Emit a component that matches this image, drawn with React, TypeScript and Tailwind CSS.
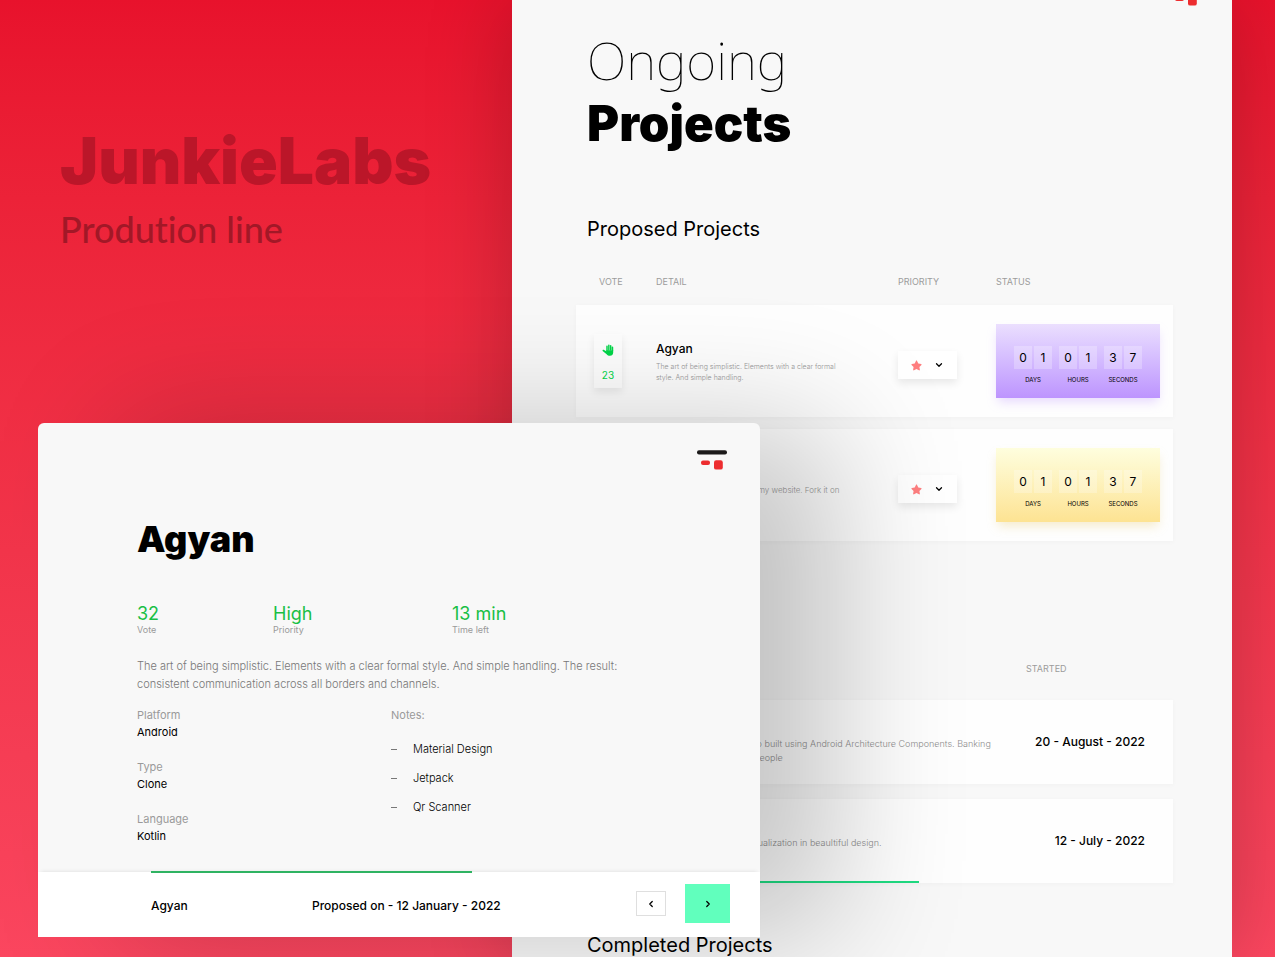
import { FiChevronDown, FiChevronLeft, FiChevronRight } from "react-icons/fi";
import { FaStar } from "react-icons/fa";

type Tone = "purple" | "yellow";

function Logo() {
  return (
    <svg width="30" height="20" viewBox="0 0 30 20" role="img" aria-label="JunkieLabs">
      <rect x="0" y="0.2" width="30" height="4.4" rx="2" fill="#1c1a1a" />
      <rect x="4" y="10.4" width="9" height="4.6" rx="2" fill="#ed2d2f" />
      <rect x="17" y="10.2" width="8.8" height="9.4" rx="2.2" fill="#ed2d2f" />
    </svg>
  );
}

function Hand() {
  return (
    <svg width="12" height="12" viewBox="0 0 24 24" fill="none" stroke="#00d648" strokeLinecap="round" aria-hidden="true">
      <path d="M10 13V4.5M13.7 12V2.5M17.4 12V3.5M21 13V6.5" strokeWidth="2.9" />
      <path d="M8.6 12.5h13.8v4.3c0 4-2.6 6.7-6.5 6.7-3.1 0-4.8-1-6.6-3.2L1.3 13.800c-.9-1 .6-2.700 2-2.100l5.300 3z" fill="#00d648" stroke="none" />
    </svg>
  );
}

const groups = [
  { label: "DAYS", digits: ["0", "1"] },
  { label: "HOURS", digits: ["0", "1"] },
  { label: "SECONDS", digits: ["3", "7"] },
];

const toneClass: Record<Tone, string> = {
  purple: "bg-linear-to-b from-[#ebdffe] to-[#bd94fe] shadow-[0_6px_10px_-2px_rgba(189,148,254,0.35)]",
  yellow: "bg-linear-to-b from-[#fefede] to-[#fde392] shadow-[0_6px_10px_-2px_rgba(230,200,110,0.35)]",
};

function Countdown({ tone }: { tone: Tone }) {
  return (
    <div className={`mr-[13px] flex h-[74px] justify-center gap-[7px] pt-[22px] ${toneClass[tone]}`}>
      {groups.map((g) => (
        <div key={g.label} className="flex w-[38px] flex-col items-center">
          <div className="flex gap-0.5">
            {g.digits.map((d, i) => (
              <span key={i} className="flex h-[23px] w-[18px] items-center justify-center bg-white/25 text-xs">
                {d}
              </span>
            ))}
          </div>
          <span className="mt-[7px] text-[6px] leading-[8px]">{g.label}</span>
        </div>
      ))}
    </div>
  );
}

const proposed: { votes: number; name: string; detail: string; inset: string; tone: Tone }[] = [
  {
    votes: 23,
    name: "Agyan",
    detail: "The art of being simplistic. Elements with a clear formal style. And simple handling.",
    inset: "w-[190px] text-[7px]",
    tone: "purple",
  },
  { votes: 12, name: "Website", detail: "my website. Fork it on", inset: "pl-[102px] text-[8px]", tone: "yellow" },
];

const started = [
  {
    lines: ["to built using Android Architecture Components. Banking", "people"],
    inset: "pl-[178px]",
    date: "20 - August - 2022",
    progress: false,
  },
  { lines: ["visualization in beaultiful design."], inset: "pl-[170px]", date: "12 - July - 2022", progress: true },
];

const stats = [
  { value: "32", label: "Vote" },
  { value: "High", label: "Priority" },
  { value: "13 min", label: "Time left" },
];

const facts = [
  { label: "Platform", value: "Android" },
  { label: "Type", value: "Clone" },
  { label: "Language", value: "Kotlin" },
];

const notes = ["Material Design", "Jetpack", "Qr Scanner"];

const rowClass = "bg-[#fefefe] shadow-[0_1px_5px_rgba(0,0,0,0.03)]";
const thClass = "p-0 text-left align-top text-[9px] leading-[22px] font-normal text-[#9c9c9c]";

function ProposedTable() {
  return (
    <table className="mt-[18px] w-full table-fixed border-separate border-spacing-x-0 border-spacing-y-3">
      <thead>
        <tr>
          <th scope="col" className={`${thClass} w-20 pl-[23px]`}>VOTE</th>
          <th scope="col" className={thClass}>DETAIL</th>
          <th scope="col" className={`${thClass} w-[98px]`}>PRIORITY</th>
          <th scope="col" className={`${thClass} w-[177px]`}>STATUS</th>
        </tr>
      </thead>
      <tbody>
        {proposed.map((p) => (
          <tr key={p.name} className={`h-28 ${rowClass}`}>
            <td className="p-0 pt-[29px] pl-[18px] align-top">
              <button
                type="button"
                aria-label={`Vote for ${p.name}`}
                className="flex h-[54px] w-7 flex-col items-center justify-between bg-[#fefefe] pt-[10px] pb-[5px] text-[10px] leading-[15px] text-[#00d648] shadow-[0_4px_8px_rgba(0,0,0,0.08)]"
              >
                <Hand />
                <span>{p.votes}</span>
              </button>
            </td>
            <td className="p-0 pt-9 align-top">
              <h3 className="text-xs leading-4 font-medium">{p.name}</h3>
              <p className={`mt-1 leading-[11px] font-light text-[#999999] ${p.inset}`}>{p.detail}</p>
            </td>
            <td className="p-0 pt-[46px] align-top">
              <button
                type="button"
                aria-label={`Priority of ${p.name}`}
                className="flex h-7 w-[59px] items-center justify-between bg-white pr-[13px] pl-[13px] shadow-[0_4px_9px_rgba(0,0,0,0.09)]"
              >
                <FaStar className="size-[11px] text-[#ff7f80]" />
                <FiChevronDown className="size-[10px] stroke-[3]" />
              </button>
            </td>
            <td className="p-0 pt-[19px] align-top">
              <Countdown tone={p.tone} />
            </td>
          </tr>
        ))}
      </tbody>
    </table>
  );
}

function StartedTable() {
  return (
    <table className="mt-[90px] w-full table-fixed border-separate border-spacing-x-0 border-spacing-y-[15px]">
      <thead>
        <tr className="h-[27px]">
          <th scope="col" className={thClass} aria-label="Detail" />
          <th scope="col" className={`${thClass} w-[147px]`}>STARTED</th>
        </tr>
      </thead>
      <tbody>
        {started.map((s) => (
          <tr key={s.date} className={`h-[84px] ${rowClass}`}>
            <td className="relative p-0 pt-[37px] align-top">
              <p className={`text-[9px] leading-[14px] font-light whitespace-nowrap text-[#8f8f8f] ${s.inset}`}>
                {s.lines.map((line) => (
                  <span key={line} className="block">{line}</span>
                ))}
              </p>
              {s.progress && <div className="absolute bottom-0 left-0 h-0.5 w-[343px] bg-[#1fdc82]" />}
            </td>
            <td className="p-0 pr-7 text-right align-middle text-xs font-medium whitespace-nowrap">{s.date}</td>
          </tr>
        ))}
      </tbody>
    </table>
  );
}

function ProjectDialog() {
  return (
    <section
      role="dialog"
      aria-labelledby="project-title"
      className="absolute top-[423px] left-[38px] w-[722px] rounded-t-md bg-[#f8f8f8] shadow-[80px_0_130px_-4px_rgba(0,0,0,0.22)]"
    >
      <div className="absolute top-[27px] right-[33px]">
        <Logo />
      </div>
      <div className="px-[99px] pt-[94px] pb-[27px]">
        <h2 id="project-title" className="text-[36px] leading-[44px] font-black">Agyan</h2>
        <dl className="mt-[41px] grid grid-cols-[136px_179px_1fr]">
          {stats.map((s) => (
            <div key={s.label} className="flex flex-col-reverse">
              <dt className="text-[9px] leading-[10px] text-[#9a9a9a]">{s.label}</dt>
              <dd className="text-lg leading-[23px] text-[#19bf45]">{s.value}</dd>
            </div>
          ))}
        </dl>
        <p className="mt-[22px] text-[11px] leading-[18px] font-light text-[#777777]">
          The art of being simplistic. Elements with a clear formal style. And simple handling. The result: consistent
          communication across all borders and channels.
        </p>
        <div className="mt-[14px] grid grid-cols-[254px_1fr] text-[11px] leading-[17px]">
          <dl className="flex flex-col gap-[18px]">
            {facts.map((f) => (
              <div key={f.label}>
                <dt className="text-[#9a9a9a]">{f.label}</dt>
                <dd>{f.value}</dd>
              </div>
            ))}
          </dl>
          <div>
            <h3 className="text-[#9a9a9a]">Notes:</h3>
            <ul className="mt-[17px] flex flex-col gap-3 font-light">
              {notes.map((n) => (
                <li key={n} className="flex items-center">
                  <span className="mr-4 h-px w-1.5 bg-[#777777]" />
                  {n}
                </li>
              ))}
            </ul>
          </div>
        </div>
      </div>
      <footer className="relative flex h-[65px] items-center bg-white pr-[30px] pl-[113px] text-xs font-medium shadow-[0_-3px_4px_-3px_rgba(0,0,0,0.12)]">
        <div className="absolute -top-px left-[113px] h-0.5 w-[321px] bg-[#2fb362]" />
        <span className="w-[161px] pt-0.5">Agyan</span>
        <span className="flex-1 pt-0.5">Proposed on - 12 January - 2022</span>
        <div className="flex items-center gap-[19px] pb-0.5">
          <button
            type="button"
            aria-label="Previous project"
            className="flex h-[25px] w-[30px] items-center justify-center border border-[#dfdfdf]"
          >
            <FiChevronLeft className="size-[10px] stroke-[3]" />
          </button>
          <button
            type="button"
            aria-label="Next project"
            className="flex h-[39px] w-[45px] items-center justify-center bg-[#61ffbd]"
          >
            <FiChevronRight className="size-[10px] stroke-[3]" />
          </button>
        </div>
      </footer>
    </section>
  );
}

export default function App() {
  return (
    <div className="relative flex min-h-screen overflow-hidden bg-linear-to-b from-[#e8122c] to-[#fb465f] font-['Inter',sans-serif] text-black">
      <aside className="w-[512px] shrink-0 pt-[123px] pl-[60px]">
        <p className="text-[64px] leading-[76px] font-black text-[#bb1629]">JunkieLabs</p>
        <p className="mt-2 font-['Lato',sans-serif] text-[36px] leading-[44px] font-medium text-[#a21827] [font-variant-ligatures:none]">
          Prodution line
        </p>
      </aside>
      <main className="relative mr-[43px] flex-1 bg-[#f8f8f8] pt-[29px] pr-[59px] pl-16 shadow-[0_0_80px_rgba(0,0,0,0.22)]">
        <div className="absolute -top-[14px] right-[31px]">
          <Logo />
        </div>
        <h1 className="pl-[11px]">
          <span className="block font-['Noto_Sans',sans-serif] text-[52px] leading-[62px] font-thin">Ongoing</span>
          <span className="block text-[49px] leading-[66px] font-black">Projects</span>
        </h1>
        <h2 className="mt-15 pl-[11px] text-xl leading-6">Proposed Projects</h2>
        <ProposedTable />
        <StartedTable />
        <h2 className="mt-[35px] pl-[11px] text-xl leading-6">Completed Projects</h2>
      </main>
      <ProjectDialog />
    </div>
  );
}
